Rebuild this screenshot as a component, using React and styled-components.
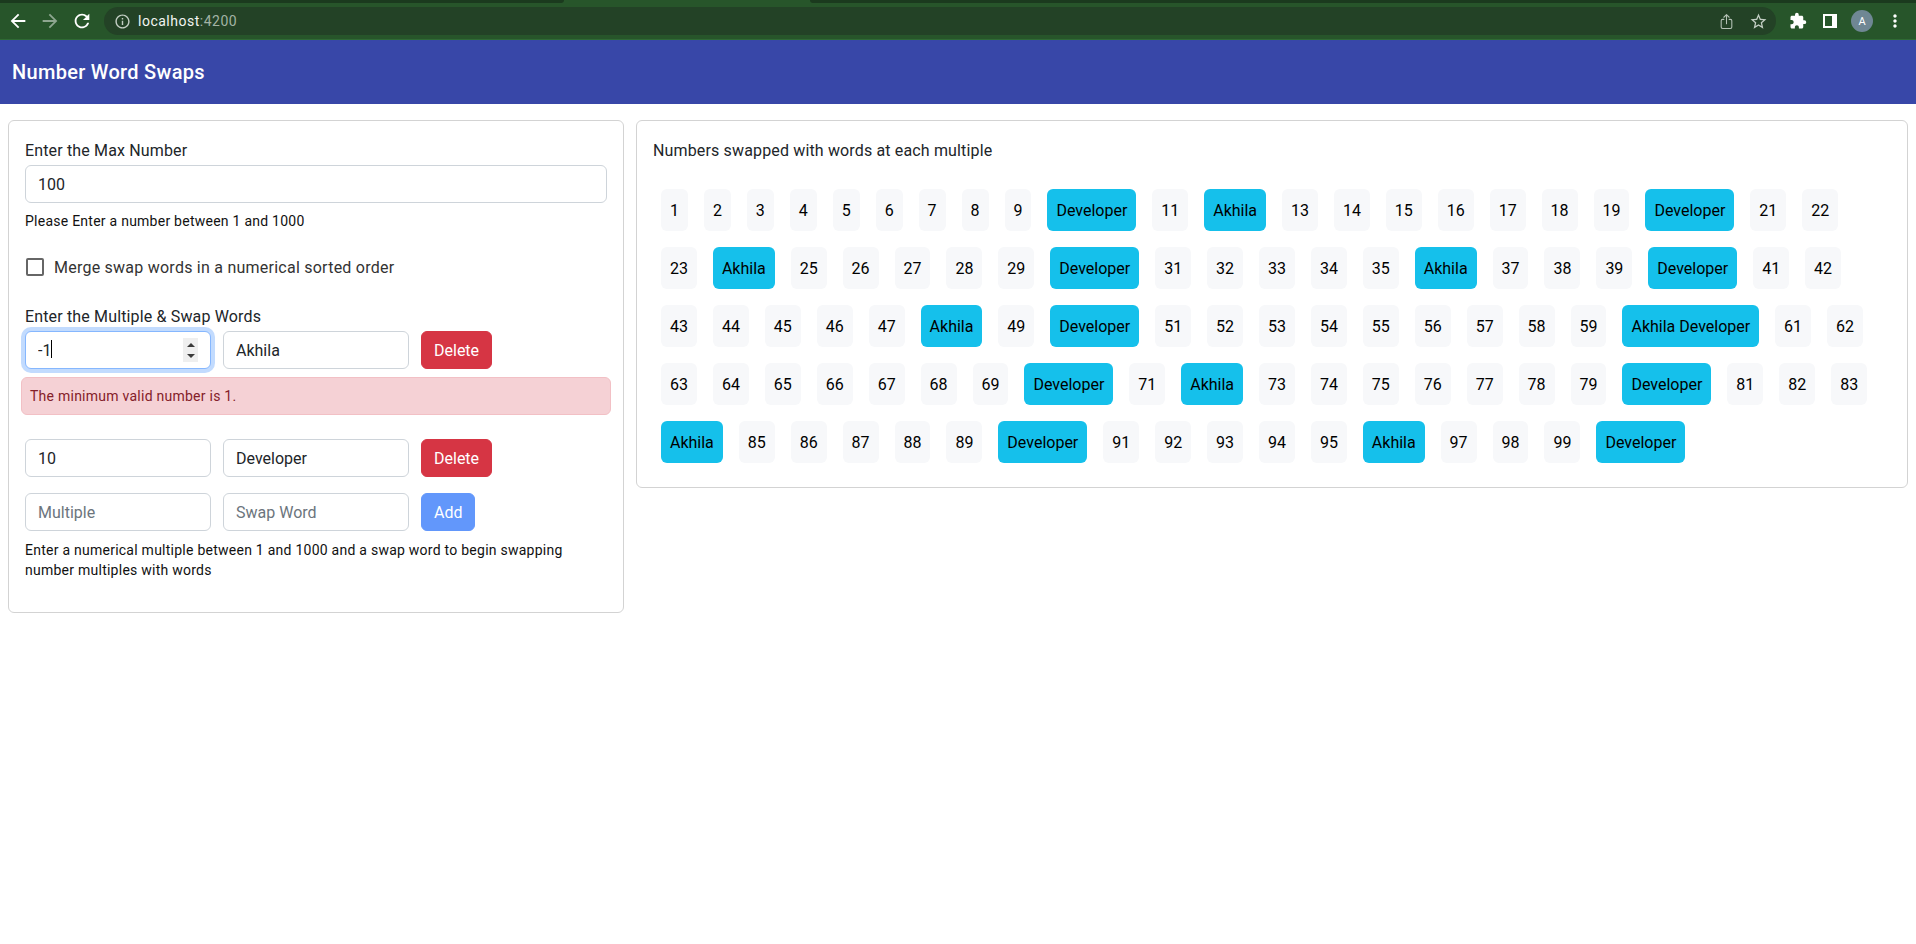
import React, { useState } from "react";
import styled, { createGlobalStyle } from "styled-components";
import { MdArrowBack, MdArrowForward, MdRefresh, MdInfoOutline, MdStarBorder, MdExtension, MdMoreVert } from "react-icons/md";
import { IoShareOutline } from "react-icons/io5";

const GlobalStyle = createGlobalStyle`
  html, body {
    margin: 0;
    background: #fff;
    font-family: Roboto, "Liberation Sans", sans-serif;
    color: #212529;
  }
`;

const BrowserBar = styled.div`
  height: 40px;
  box-sizing: border-box;
  display: flex;
  align-items: center;
  padding: 3px 4px 0 2px;
  background: #27552a;
  border-bottom: 1px solid #2f6a34;
  position: relative;
`;

const TabStrip = styled.div`
  position: absolute;
  top: 0;
  left: 0;
  right: 0;
  height: 3px;
  display: flex;
  justify-content: space-between;
`;

const TabEdge = styled.div`
  width: ${(p) => (p.$left ? "564px" : "1106px")};
  background: #1b3a1e;
  border-radius: ${(p) => (p.$left ? "0 0 4px 0" : "0 0 0 4px")};
`;

const IconSlot = styled.div`
  width: ${(p) => p.$width || 32}px;
  height: 28px;
  flex: none;
  display: flex;
  align-items: center;
  justify-content: center;
  color: ${(p) => p.$color || "#fff"};
  font-size: ${(p) => p.$size || 22}px;
`;

const Omnibox = styled.div`
  flex: 1;
  height: 28px;
  margin: 0 6px;
  padding: 0 2px;
  display: flex;
  align-items: center;
  border-radius: 14px;
  background: #234226;
  color: #fff;
  font-size: 14px;
`;

const Host = styled.span`
  color: #f1f4f1;
  letter-spacing: 0.5px;
`;

const Port = styled.span`
  color: #a2b3a4;
  letter-spacing: 0.5px;
`;

const Spacer = styled.div`
  flex: 1;
`;

const SidePanel = styled.div`
  width: 14px;
  height: 14px;
  box-sizing: border-box;
  background: #fff;
  padding: 2px 5px 2px 2px;
  &::before {
    content: "";
    display: block;
    height: 100%;
    background: #27552a;
  }
`;

const Avatar = styled.div`
  width: 22px;
  height: 22px;
  border-radius: 50%;
  background: #6f8794;
  color: #fff;
  font-size: 11px;
  display: flex;
  align-items: center;
  justify-content: center;
`;

const Toolbar = styled.header`
  height: 64px;
  display: flex;
  align-items: center;
  padding: 0 12px;
  background: #3847a8;
  color: #fff;
  font-size: 20px;
  font-weight: 500;
  letter-spacing: 0.3px;
`;

const Content = styled.main`
  display: flex;
  align-items: flex-start;
  gap: 12px;
  padding: 16px 8px;
`;

const Card = styled.section`
  box-sizing: border-box;
  border: 1px solid #d3d3d3;
  border-radius: 6px;
  padding: 18px 16px ${(p) => (p.$fill ? 16 : 32)}px;
  flex: ${(p) => (p.$fill ? "1" : "none")};
  width: ${(p) => (p.$fill ? "auto" : "616px")};
  min-width: 0;
`;

const Label = styled.div`
  font-size: 16px;
  line-height: 24px;
  letter-spacing: 0.15px;
  margin-top: ${(p) => p.$top || 0}px;
  margin-bottom: ${(p) => p.$bottom || 0}px;
`;

const FieldBox = styled.div`
  position: relative;
  flex: none;
  width: ${(p) => (p.$full ? "100%" : "186px")};
`;

const Field = styled.input`
  box-sizing: border-box;
  display: block;
  width: 100%;
  height: 38px;
  padding: 0 12px;
  border-radius: 6px;
  border: 1px solid ${(p) => (p.$focused ? "#86b7fe" : "#ced4da")};
  box-shadow: ${(p) => (p.$focused ? "0 0 0 4px rgba(13, 110, 253, 0.25)" : "none")};
  font-family: inherit;
  font-size: 16px;
  color: #212529;
  outline: none;
  &::placeholder {
    color: #6c757d;
  }
`;

const Caret = styled.span`
  position: absolute;
  left: 26px;
  top: 9px;
  width: 1px;
  height: 18px;
  background: #000;
`;

const Spinner = styled.span`
  position: absolute;
  right: 13px;
  top: 7px;
  width: 15px;
  height: 24px;
  background: #efefef;
  display: flex;
  flex-direction: column;
  align-items: center;
  justify-content: center;
  gap: 7px;
  svg {
    display: block;
  }
`;

const Help = styled.div`
  font-size: 14px;
  line-height: 20px;
  letter-spacing: 0.25px;
  margin-top: ${(p) => p.$top || 8}px;
  color: #111;
`;

const CheckRow = styled.label`
  display: flex;
  align-items: center;
  height: 24px;
  margin-top: 24px;
  padding-left: 1px;
  gap: 10px;
  font-size: 16px;
  letter-spacing: 0.24px;
  color: #333;
`;

const Check = styled.input`
  appearance: none;
  box-sizing: border-box;
  width: 18px;
  height: 18px;
  margin: 0;
  border: 2px solid #666;
  border-radius: 2px;
  background: #fff;
`;

const Row = styled.div`
  display: flex;
  gap: 12px;
  margin-top: ${(p) => p.$top || 0}px;
`;

const Button = styled.button`
  height: 38px;
  padding: 0 12px;
  border: 1px solid ${(p) => (p.$danger ? "#d63544" : "#6297fb")};
  border-radius: 6px;
  background: ${(p) => (p.$danger ? "#d63544" : "#6297fb")};
  color: #fff;
  font-family: inherit;
  font-size: 16px;
`;

const Alert = styled.div`
  box-sizing: border-box;
  height: 38px;
  margin: 8px -4px 0;
  padding: 0 8px;
  display: flex;
  align-items: center;
  border: 1px solid #f2c0c5;
  border-radius: 6px;
  background: #f5d1d5;
  color: #842029;
  font-size: 14px;
  letter-spacing: 0.25px;
`;

const Chips = styled.div`
  display: flex;
  flex-wrap: wrap;
  margin-top: 18px;
`;

const Chip = styled.div`
  box-sizing: border-box;
  height: 42px;
  margin: 8px;
  padding: 0 8.98px;
  display: flex;
  align-items: center;
  border-radius: 6px;
  background: ${(p) => (p.$swapped ? "#15c0eb" : "#f7f8fa")};
  color: #000;
  font-size: 16px;
`;

const rules = [
  { multiple: 12, word: "Akhila" },
  { multiple: 10, word: "Developer" },
];

const swapNumber = (n) => {
  const words = rules.filter((r) => n % r.multiple === 0).map((r) => r.word);
  return words.length ? words.join(" ") : null;
};

const numbers = Array.from({ length: 100 }, (_, i) => i + 1);

const Triangle = ({ up }) => (
  <svg width="8" height="4" viewBox="0 0 8 4">
    <path d={up ? "M4 0 L8 4 L0 4 Z" : "M0 0 L8 0 L4 4 Z"} fill="#3a3a3a" />
  </svg>
);

const App = () => {
  const [max, setMax] = useState("100");
  const [merged, setMerged] = useState(false);

  return (
    <>
      <GlobalStyle />
      <BrowserBar>
        <TabStrip>
          <TabEdge $left />
          <TabEdge />
        </TabStrip>
        <IconSlot><MdArrowBack /></IconSlot>
        <IconSlot $color="#8ea690"><MdArrowForward /></IconSlot>
        <IconSlot><MdRefresh /></IconSlot>
        <Omnibox>
          <IconSlot $size={17} $color="#c3cec4"><MdInfoOutline /></IconSlot>
          <Host>localhost</Host>
          <Port>:4200</Port>
          <Spacer />
          <IconSlot $size={17} $color="#b5c2b6"><IoShareOutline /></IconSlot>
          <IconSlot $size={19} $color="#c3cec4"><MdStarBorder /></IconSlot>
        </Omnibox>
        <IconSlot $size={18}><MdExtension /></IconSlot>
        <IconSlot><SidePanel /></IconSlot>
        <IconSlot><Avatar>A</Avatar></IconSlot>
        <IconSlot $width={34} $size={20}><MdMoreVert /></IconSlot>
      </BrowserBar>

      <Toolbar>Number Word Swaps</Toolbar>

      <Content>
        <Card>
          <Label $bottom={2}>Enter the Max Number</Label>
          <FieldBox $full>
            <Field type="text" value={max} onChange={(e) => setMax(e.target.value)} />
          </FieldBox>
          <Help>Please Enter a number between 1 and 1000</Help>
          <CheckRow>
            <Check type="checkbox" checked={merged} onChange={(e) => setMerged(e.target.checked)} />
            Merge swap words in a numerical sorted order
          </CheckRow>
          <Label $top={26} $bottom={2}>Enter the Multiple &amp; Swap Words</Label>
          <Row>
            <FieldBox>
              <Field $focused type="text" defaultValue="-1" />
              <Caret />
              <Spinner>
                <Triangle up />
                <Triangle />
              </Spinner>
            </FieldBox>
            <FieldBox>
              <Field type="text" defaultValue="Akhila" />
            </FieldBox>
            <Button $danger>Delete</Button>
          </Row>
          <Alert>The minimum valid number is 1.</Alert>
          <Row $top={24}>
            <FieldBox>
              <Field type="text" defaultValue="10" />
            </FieldBox>
            <FieldBox>
              <Field type="text" defaultValue="Developer" />
            </FieldBox>
            <Button $danger>Delete</Button>
          </Row>
          <Row $top={16}>
            <FieldBox>
              <Field type="text" placeholder="Multiple" />
            </FieldBox>
            <FieldBox>
              <Field type="text" placeholder="Swap Word" />
            </FieldBox>
            <Button>Add</Button>
          </Row>
          <Help $top={9}>
            Enter a numerical multiple between 1 and 1000 and a swap word to begin swapping
            number multiples with words
          </Help>
        </Card>

        <Card $fill>
          <Label>Numbers swapped with words at each multiple</Label>
          <Chips>
            {numbers.map((n) => {
              const word = swapNumber(n);
              return (
                <Chip key={n} $swapped={!!word}>
                  {word || n}
                </Chip>
              );
            })}
          </Chips>
        </Card>
      </Content>
    </>
  );
};

export default App;
